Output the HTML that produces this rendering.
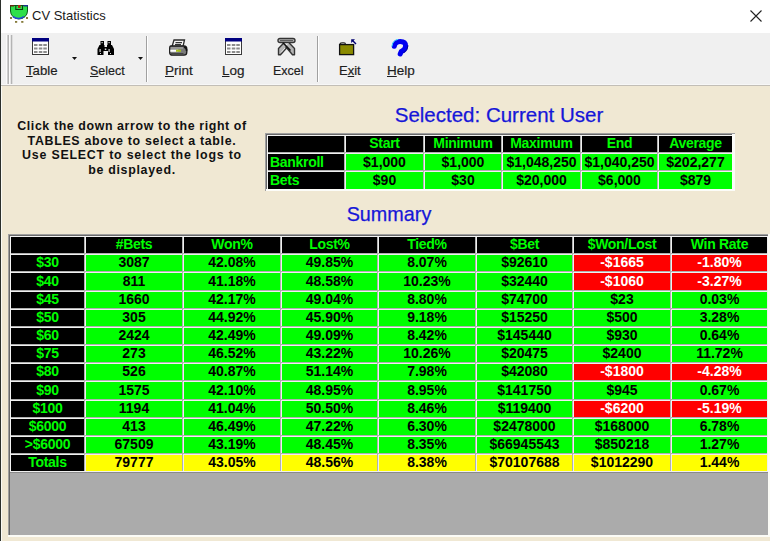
<!DOCTYPE html>
<html><head><meta charset="utf-8"><title>CV Statistics</title><style>
*{margin:0;padding:0;box-sizing:border-box}
html,body{width:770px;height:541px;overflow:hidden;background:#f0e8d3;font-family:"Liberation Sans",sans-serif}
.a{position:absolute}
.g{position:absolute;font-weight:bold;font-size:14px;letter-spacing:-0.3px;white-space:nowrap;overflow:hidden}
.d{letter-spacing:0}
.lbl{position:absolute;font-size:12.5px;color:#1e1e1e;-webkit-text-stroke:0.2px #1e1e1e;white-space:nowrap;line-height:14px}
.u{text-decoration:underline;text-underline-offset:1px}
</style></head>
<body>
<div class="a" style="left:0;top:0;width:770px;height:33px;background:#fff"></div>
<div class="a" style="left:0;top:0;width:1px;height:541px;background:#2b2f2b"></div>
<div class="a" style="left:1px;top:33px;width:1px;height:508px;background:#fafaf5"></div>
<svg class="a" style="left:9px;top:4px" width="22" height="22" viewBox="0 0 22 22">
<path d="M1.5 1.5 H18.5 V7 A8.5 8 0 0 1 1.5 7 Z" fill="#2ee04a" stroke="#0b5a1a" stroke-width="1"/>
<path d="M4 12.6 A8.5 8 0 0 0 15 12.6" fill="none" stroke="#2248d0" stroke-width="1.6"/>
<rect x="1" y="1" width="4" height="1.5" fill="#6a2a10"/>
<rect x="14.5" y="1" width="4.5" height="1.5" fill="#203090"/>
<path d="M6.8 1.5 V5.5 H13.5 V1.5" fill="none" stroke="#0a3a10" stroke-width="1.1"/>
<rect x="9" y="1" width="2.6" height="3" fill="#b02810"/>
<rect x="1" y="13" width="2" height="2" fill="#857a3a"/>
<rect x="17" y="13" width="2" height="2" fill="#857a3a"/>
<rect x="6" y="17" width="2.2" height="1.8" fill="#857a3a"/>
<rect x="12.2" y="17" width="2.2" height="1.8" fill="#857a3a"/>
</svg>
<div class="a" style="left:32px;top:8px;font-size:13px;color:#1a1a1a;white-space:nowrap;line-height:15px">CV Statistics</div>
<svg class="a" style="left:750px;top:10px" width="12" height="12" viewBox="0 0 12 12"><path d="M0.5 0.5 L11.5 11.5 M11.5 0.5 L0.5 11.5" stroke="#222" stroke-width="1.1"/></svg>
<div class="a" style="left:1px;top:33px;width:769px;height:51px;background:#f0f0f0"></div>
<div class="a" style="left:1px;top:84px;width:769px;height:1px;background:#f7f7f7"></div>
<div class="a" style="left:1px;top:85px;width:769px;height:1px;background:#c2beb6"></div>
<div class="a" style="left:6px;top:35px;width:1px;height:49px;background:#fafafa"></div>
<div class="a" style="left:7px;top:35px;width:1px;height:49px;background:#cdcdcd"></div>
<div class="a" style="left:8px;top:35px;width:1px;height:49px;background:#b4b4b4"></div>
<div class="a" style="left:9px;top:35px;width:1px;height:49px;background:#fafafa"></div>
<div class="a" style="left:10px;top:35px;width:1px;height:49px;background:#e6e6e6"></div>
<div class="a" style="left:11px;top:35px;width:1px;height:49px;background:#b4b4b4"></div>
<div class="a" style="left:12px;top:35px;width:1px;height:49px;background:#dedede"></div>
<div class="a" style="left:146px;top:36px;width:1px;height:46px;background:#a0a0a0"></div>
<div class="a" style="left:147px;top:36px;width:1px;height:46px;background:#fff"></div>
<div class="a" style="left:317px;top:36px;width:1px;height:46px;background:#a0a0a0"></div>
<div class="a" style="left:318px;top:36px;width:1px;height:46px;background:#fff"></div>
<svg class="a" style="left:72px;top:57px" width="5" height="3" viewBox="0 0 5 3"><path d="M0 0H5L2.5 3Z" fill="#111"/></svg>
<svg class="a" style="left:138px;top:57px" width="5" height="3" viewBox="0 0 5 3"><path d="M0 0H5L2.5 3Z" fill="#111"/></svg>
<svg class="a" style="left:32px;top:38px" width="17" height="17" viewBox="0 0 17 17">
<rect x="0.5" y="0.5" width="16" height="16" fill="#fff" stroke="#3a3a3a"/>
<rect x="0" y="0" width="17" height="3.5" fill="#000080"/>
<g fill="#8c8c8c">
<rect x="2" y="6" width="3.5" height="2"/><rect x="6.8" y="6" width="3.5" height="2"/><rect x="11.3" y="6" width="3.5" height="2"/>
<rect x="2" y="9.5" width="3.5" height="2"/><rect x="6.8" y="9.5" width="3.5" height="2"/><rect x="11.3" y="9.5" width="3.5" height="2"/>
<rect x="2" y="13" width="3.5" height="2"/><rect x="6.8" y="13" width="3.5" height="2"/><rect x="11.3" y="13" width="3.5" height="2"/>
</g></svg>
<svg class="a" style="left:225px;top:38px" width="17" height="17" viewBox="0 0 17 17">
<rect x="0.5" y="0.5" width="16" height="16" fill="#fff" stroke="#3a3a3a"/>
<rect x="0" y="0" width="17" height="3.5" fill="#000080"/>
<g fill="#8c8c8c">
<rect x="2" y="6" width="3.5" height="2"/><rect x="6.8" y="6" width="3.5" height="2"/><rect x="11.3" y="6" width="3.5" height="2"/>
<rect x="2" y="9.5" width="3.5" height="2"/><rect x="6.8" y="9.5" width="3.5" height="2"/><rect x="11.3" y="9.5" width="3.5" height="2"/>
<rect x="2" y="13" width="3.5" height="2"/><rect x="6.8" y="13" width="3.5" height="2"/><rect x="11.3" y="13" width="3.5" height="2"/>
</g></svg>
<svg class="a" style="left:97px;top:40px" width="18" height="16" viewBox="0 0 18 16">
<g fill="#000">
<rect x="3.5" y="1" width="3.5" height="4"/><rect x="10.5" y="1" width="3.5" height="4"/>
<path d="M2.5 5 H7.5 V7 H10 V5 H15 L17 9 V15 H11 V11 H6.5 V15 H0.5 V9 Z"/>
</g>
<g fill="#fff" opacity="0.85">
<rect x="4.5" y="2" width="1.2" height="1.2"/><rect x="11.5" y="2" width="1.2" height="1.2"/>
<rect x="2.5" y="9" width="1.2" height="3"/><rect x="11.5" y="9" width="1.2" height="3"/>
<rect x="3" y="13" width="1" height="1"/><rect x="13" y="13" width="1" height="1"/>
<rect x="7.8" y="8.5" width="1.5" height="1.5"/>
</g></svg>
<svg class="a" style="left:169px;top:39px" width="19" height="17" viewBox="0 0 19 17">
<path d="M5 1 H15.5 L14 7.5 H3 Z" fill="#f4f4f4" stroke="#2a2a2a" stroke-width="1.3"/>
<path d="M6.5 3.6 H13 M6 5.6 H12" stroke="#333" stroke-width="1.2"/>
<path d="M1.8 7 H15 Q17.8 7 17.8 10 V13 Q17.8 16.2 15 16.2 H3.5 Q0.7 16.2 0.7 13.5 V9.5 Q0.7 7 1.8 7Z" fill="#7a7a7a" stroke="#1a1a1a" stroke-width="1.3"/>
<path d="M1.5 9 H14" stroke="#b0b0b0" stroke-width="1"/>
<rect x="1.3" y="10.6" width="8" height="2.2" fill="#fff"/>
<rect x="7" y="10.6" width="5" height="2.2" fill="#a8c020"/>
<path d="M15 8 Q18 9 17.5 12" stroke="#111" stroke-width="1.6" fill="none"/>
<path d="M2 14.6 H14.5" stroke="#444" stroke-width="1.2"/>
</svg>
<svg class="a" style="left:277px;top:37px" width="19" height="19" viewBox="0 0 19 19">
<path d="M3 1.5 H16 Q18 1.5 18 3.5 Q18 5.5 16 5.5 H3 Q1 5.5 1 3.5 Q1 1.5 3 1.5Z" fill="#b4b4b4" stroke="#333" stroke-width="1.4"/>
<path d="M3 3.6 H16" stroke="#555" stroke-width="1"/>
<path d="M7 5.8 L1.5 11.5 V17.8 H3.5 L9.3 11.2 M12 5.8 L17.5 11.5 V17.8 H15.5 L8.5 9.5" fill="#b4b4b4" stroke="#333" stroke-width="1.4" stroke-linejoin="round"/>
<path d="M6 5.8 L13.5 13.5" stroke="#111" stroke-width="1.5"/>
<path d="M4 15.5 L8 11" stroke="#e8e8e8" stroke-width="1"/>
</svg>
<svg class="a" style="left:338px;top:38px" width="20" height="18" viewBox="0 0 20 18">
<path d="M2 6.5 Q2 4.8 4 4.8 H6 Q7.5 4.8 7.5 6.5" fill="#fff" stroke="#222" stroke-width="1.2"/>
<rect x="1.6" y="6.6" width="14" height="10" fill="#8a8a00" stroke="#111" stroke-width="1.3"/>
<path d="M18 6 L14.5 2.5" stroke="#000070" stroke-width="1.4"/>
<path d="M13.2 1.2 H17 L13.2 5 Z" fill="#000070"/>
</svg>
<svg class="a" style="left:390px;top:38px" width="20" height="20" viewBox="0 0 20 20">
<path d="M4.3 8.3 Q5 3.6 10.2 3.6 Q15.6 3.6 15.6 8 Q15.6 11.6 11.2 13.6 L10.2 16" fill="none" stroke="#0000f0" stroke-width="5" stroke-linecap="round"/>
<path d="M1.9 8.6 Q2.5 2.4 8 1.4" fill="none" stroke="#40e0ff" stroke-width="1"/>
<path d="M18 7.5 Q18 12 13.5 15" fill="none" stroke="#000090" stroke-width="1"/>
</svg>
<div class="lbl" style="left:26px;top:64px;font-size:13.2px"><span class="u">T</span>able</div>
<div class="lbl" style="left:90px;top:64px;font-size:12.5px"><span class="u">S</span>elect</div>
<div class="lbl" style="left:165px;top:64px;font-size:13.5px"><span class="u">P</span>rint</div>
<div class="lbl" style="left:222px;top:64px;font-size:13.5px"><span class="u">L</span>og</div>
<div class="lbl" style="left:273px;top:64px;font-size:12.5px">Excel</div>
<div class="lbl" style="left:339px;top:64px;font-size:13px">E<span class="u">x</span>it</div>
<div class="lbl" style="left:387px;top:64px;font-size:13.5px"><span class="u">H</span>elp</div>
<div class="a" style="left:12px;top:119px;width:240px;text-align:center;font-weight:bold;font-size:12.4px;line-height:14.7px;color:#111;letter-spacing:0.55px;white-space:nowrap"><span style="letter-spacing:0.6px">Click the down arrow to the right of</span><br><span style="letter-spacing:0.68px">TABLES above to select a table.</span><br><span style="letter-spacing:0.78px">Use SELECT to select the logs to</span><br><span style="letter-spacing:0.7px">be displayed.</span></div>
<div class="a" style="left:299px;top:104px;width:400px;text-align:center;font-size:20.5px;line-height:22px;color:#1616d8;-webkit-text-stroke:0.25px #1616d8;white-space:nowrap">Selected: Current User</div>
<div class="a" style="left:189px;top:203px;width:400px;text-align:center;font-size:19.8px;line-height:22px;color:#1616d8;-webkit-text-stroke:0.25px #1616d8;white-space:nowrap">Summary</div>
<div class="a" style="left:265px;top:133px;width:470px;height:58px;background:#f0f0f0"></div>
<div class="a" style="left:265px;top:133px;width:470px;height:1px;background:#a0a0a0"></div>
<div class="a" style="left:265px;top:133px;width:1px;height:58px;background:#a0a0a0"></div>
<div class="a" style="left:266px;top:134px;width:468px;height:1px;background:#696969"></div>
<div class="a" style="left:266px;top:134px;width:1px;height:56px;background:#696969"></div>
<div class="a" style="left:267px;top:135px;width:467px;height:1px;background:#f4f4f4"></div>
<div class="a" style="left:267px;top:135px;width:1px;height:55px;background:#f4f4f4"></div>
<div class="a" style="left:732px;top:134px;width:3px;height:57px;background:#fcfcf8"></div>
<div class="a" style="left:266px;top:189px;width:469px;height:2px;background:#fcfcf8"></div>
<div class="a" style="left:344px;top:136px;width:1px;height:53px;background:#b0b0b0"></div>
<div class="a" style="left:423px;top:136px;width:1px;height:53px;background:#b0b0b0"></div>
<div class="a" style="left:501px;top:136px;width:1px;height:53px;background:#b0b0b0"></div>
<div class="a" style="left:580px;top:136px;width:1px;height:53px;background:#b0b0b0"></div>
<div class="a" style="left:657px;top:136px;width:1px;height:53px;background:#b0b0b0"></div>
<div class="a" style="left:268px;top:152px;width:464px;height:1px;background:#b0b0b0"></div>
<div class="a" style="left:268px;top:170px;width:464px;height:1px;background:#b0b0b0"></div>
<div class="g" style="left:268px;top:136px;width:76px;height:16px;line-height:15px;background:#000;color:#00ff00;text-align:center;"></div>
<div class="g" style="left:346px;top:136px;width:77px;height:16px;line-height:15px;background:#000;color:#00ff00;text-align:center;">Start</div>
<div class="g" style="left:425px;top:136px;width:76px;height:16px;line-height:15px;background:#000;color:#00ff00;text-align:center;">Minimum</div>
<div class="g" style="left:503px;top:136px;width:77px;height:16px;line-height:15px;background:#000;color:#00ff00;text-align:center;">Maximum</div>
<div class="g" style="left:582px;top:136px;width:75px;height:16px;line-height:15px;background:#000;color:#00ff00;text-align:center;">End</div>
<div class="g" style="left:659px;top:136px;width:73px;height:16px;line-height:15px;background:#000;color:#00ff00;text-align:center;">Average</div>
<div class="g" style="left:268px;top:154px;width:76px;height:16px;line-height:17px;background:#000;color:#00ff00;text-align:left;padding-left:2px;">Bankroll</div>
<div class="g d" style="left:346px;top:154px;width:77px;height:16px;line-height:17px;background:#00ff00;color:#000;text-align:center;">$1,000</div>
<div class="g d" style="left:425px;top:154px;width:76px;height:16px;line-height:17px;background:#00ff00;color:#000;text-align:center;">$1,000</div>
<div class="g d" style="left:503px;top:154px;width:77px;height:16px;line-height:17px;background:#00ff00;color:#000;text-align:center;">$1,048,250</div>
<div class="g d" style="left:582px;top:154px;width:75px;height:16px;line-height:17px;background:#00ff00;color:#000;text-align:center;">$1,040,250</div>
<div class="g d" style="left:659px;top:154px;width:73px;height:16px;line-height:17px;background:#00ff00;color:#000;text-align:center;">$202,277</div>
<div class="g" style="left:268px;top:172px;width:76px;height:17px;line-height:16px;background:#000;color:#00ff00;text-align:left;padding-left:2px;">Bets</div>
<div class="g d" style="left:346px;top:172px;width:77px;height:17px;line-height:16px;background:#00ff00;color:#000;text-align:center;">$90</div>
<div class="g d" style="left:425px;top:172px;width:76px;height:17px;line-height:16px;background:#00ff00;color:#000;text-align:center;">$30</div>
<div class="g d" style="left:503px;top:172px;width:77px;height:17px;line-height:16px;background:#00ff00;color:#000;text-align:center;">$20,000</div>
<div class="g d" style="left:582px;top:172px;width:75px;height:17px;line-height:16px;background:#00ff00;color:#000;text-align:center;">$6,000</div>
<div class="g d" style="left:659px;top:172px;width:73px;height:17px;line-height:16px;background:#00ff00;color:#000;text-align:center;">$879</div>
<div class="a" style="left:8px;top:234px;width:762px;height:303px;background:#ababab"></div>
<div class="a" style="left:10px;top:236px;width:758px;height:236px;background:#f0f0f0"></div>
<div class="a" style="left:8px;top:234px;width:762px;height:1px;background:#a0a0a0"></div>
<div class="a" style="left:8px;top:234px;width:1px;height:303px;background:#a0a0a0"></div>
<div class="a" style="left:9px;top:235px;width:760px;height:1px;background:#696969"></div>
<div class="a" style="left:9px;top:235px;width:1px;height:301px;background:#696969"></div>
<div class="a" style="left:10px;top:236px;width:757px;height:1px;background:#f4f4f4"></div>
<div class="a" style="left:10px;top:236px;width:1px;height:235px;background:#f4f4f4"></div>
<div class="a" style="left:768px;top:234px;width:2px;height:303px;background:#fbfbf6"></div>
<div class="a" style="left:8px;top:535px;width:762px;height:2px;background:#fbfbf6"></div>
<div class="a" style="left:84px;top:237px;width:1px;height:234px;background:#b0b0b0"></div>
<div class="a" style="left:182px;top:237px;width:1px;height:234px;background:#b0b0b0"></div>
<div class="a" style="left:280px;top:237px;width:1px;height:234px;background:#b0b0b0"></div>
<div class="a" style="left:377px;top:237px;width:1px;height:234px;background:#b0b0b0"></div>
<div class="a" style="left:475px;top:237px;width:1px;height:234px;background:#b0b0b0"></div>
<div class="a" style="left:572px;top:237px;width:1px;height:234px;background:#b0b0b0"></div>
<div class="a" style="left:670px;top:237px;width:1px;height:234px;background:#b0b0b0"></div>
<div class="a" style="left:11px;top:253px;width:756px;height:1px;background:#b0b0b0"></div>
<div class="a" style="left:11px;top:271px;width:756px;height:1px;background:#b0b0b0"></div>
<div class="a" style="left:11px;top:290px;width:756px;height:1px;background:#b0b0b0"></div>
<div class="a" style="left:11px;top:308px;width:756px;height:1px;background:#b0b0b0"></div>
<div class="a" style="left:11px;top:326px;width:756px;height:1px;background:#b0b0b0"></div>
<div class="a" style="left:11px;top:344px;width:756px;height:1px;background:#b0b0b0"></div>
<div class="a" style="left:11px;top:362px;width:756px;height:1px;background:#b0b0b0"></div>
<div class="a" style="left:11px;top:380px;width:756px;height:1px;background:#b0b0b0"></div>
<div class="a" style="left:11px;top:399px;width:756px;height:1px;background:#b0b0b0"></div>
<div class="a" style="left:11px;top:417px;width:756px;height:1px;background:#b0b0b0"></div>
<div class="a" style="left:11px;top:435px;width:756px;height:1px;background:#b0b0b0"></div>
<div class="a" style="left:11px;top:453px;width:756px;height:1px;background:#b0b0b0"></div>
<div class="a" style="left:10px;top:472px;width:758px;height:1px;background:#8a8a8a"></div>
<div class="g" style="left:11px;top:237px;width:73px;height:16px;line-height:15px;background:#000;color:#00ff00;text-align:center;"></div>
<div class="g" style="left:86px;top:237px;width:96px;height:16px;line-height:15px;background:#000;color:#00ff00;text-align:center;">#Bets</div>
<div class="g" style="left:184px;top:237px;width:96px;height:16px;line-height:15px;background:#000;color:#00ff00;text-align:center;">Won%</div>
<div class="g" style="left:282px;top:237px;width:95px;height:16px;line-height:15px;background:#000;color:#00ff00;text-align:center;">Lost%</div>
<div class="g" style="left:379px;top:237px;width:96px;height:16px;line-height:15px;background:#000;color:#00ff00;text-align:center;">Tied%</div>
<div class="g" style="left:477px;top:237px;width:95px;height:16px;line-height:15px;background:#000;color:#00ff00;text-align:center;">$Bet</div>
<div class="g" style="left:574px;top:237px;width:96px;height:16px;line-height:15px;background:#000;color:#00ff00;text-align:center;">$Won/Lost</div>
<div class="g" style="left:672px;top:237px;width:95px;height:16px;line-height:15px;background:#000;color:#00ff00;text-align:center;">Win Rate</div>
<div class="g" style="left:11px;top:255px;width:73px;height:16px;line-height:15px;background:#000;color:#00ff00;text-align:center;">$30</div>
<div class="g d" style="left:86px;top:255px;width:96px;height:16px;line-height:15px;background:#00ff00;color:#000;text-align:center;">3087</div>
<div class="g d" style="left:184px;top:255px;width:96px;height:16px;line-height:15px;background:#00ff00;color:#000;text-align:center;">42.08%</div>
<div class="g d" style="left:282px;top:255px;width:95px;height:16px;line-height:15px;background:#00ff00;color:#000;text-align:center;">49.85%</div>
<div class="g d" style="left:379px;top:255px;width:96px;height:16px;line-height:15px;background:#00ff00;color:#000;text-align:center;">8.07%</div>
<div class="g d" style="left:477px;top:255px;width:95px;height:16px;line-height:15px;background:#00ff00;color:#000;text-align:center;">$92610</div>
<div class="g d" style="left:574px;top:255px;width:96px;height:16px;line-height:15px;background:#ff0000;color:#fff;text-align:center;">-$1665</div>
<div class="g d" style="left:672px;top:255px;width:95px;height:16px;line-height:15px;background:#ff0000;color:#fff;text-align:center;">-1.80%</div>
<div class="g" style="left:11px;top:273px;width:73px;height:17px;line-height:16px;background:#000;color:#00ff00;text-align:center;">$40</div>
<div class="g d" style="left:86px;top:273px;width:96px;height:17px;line-height:16px;background:#00ff00;color:#000;text-align:center;">811</div>
<div class="g d" style="left:184px;top:273px;width:96px;height:17px;line-height:16px;background:#00ff00;color:#000;text-align:center;">41.18%</div>
<div class="g d" style="left:282px;top:273px;width:95px;height:17px;line-height:16px;background:#00ff00;color:#000;text-align:center;">48.58%</div>
<div class="g d" style="left:379px;top:273px;width:96px;height:17px;line-height:16px;background:#00ff00;color:#000;text-align:center;">10.23%</div>
<div class="g d" style="left:477px;top:273px;width:95px;height:17px;line-height:16px;background:#00ff00;color:#000;text-align:center;">$32440</div>
<div class="g d" style="left:574px;top:273px;width:96px;height:17px;line-height:16px;background:#ff0000;color:#fff;text-align:center;">-$1060</div>
<div class="g d" style="left:672px;top:273px;width:95px;height:17px;line-height:16px;background:#ff0000;color:#fff;text-align:center;">-3.27%</div>
<div class="g" style="left:11px;top:292px;width:73px;height:16px;line-height:15px;background:#000;color:#00ff00;text-align:center;">$45</div>
<div class="g d" style="left:86px;top:292px;width:96px;height:16px;line-height:15px;background:#00ff00;color:#000;text-align:center;">1660</div>
<div class="g d" style="left:184px;top:292px;width:96px;height:16px;line-height:15px;background:#00ff00;color:#000;text-align:center;">42.17%</div>
<div class="g d" style="left:282px;top:292px;width:95px;height:16px;line-height:15px;background:#00ff00;color:#000;text-align:center;">49.04%</div>
<div class="g d" style="left:379px;top:292px;width:96px;height:16px;line-height:15px;background:#00ff00;color:#000;text-align:center;">8.80%</div>
<div class="g d" style="left:477px;top:292px;width:95px;height:16px;line-height:15px;background:#00ff00;color:#000;text-align:center;">$74700</div>
<div class="g d" style="left:574px;top:292px;width:96px;height:16px;line-height:15px;background:#00ff00;color:#000;text-align:center;">$23</div>
<div class="g d" style="left:672px;top:292px;width:95px;height:16px;line-height:15px;background:#00ff00;color:#000;text-align:center;">0.03%</div>
<div class="g" style="left:11px;top:310px;width:73px;height:16px;line-height:15px;background:#000;color:#00ff00;text-align:center;">$50</div>
<div class="g d" style="left:86px;top:310px;width:96px;height:16px;line-height:15px;background:#00ff00;color:#000;text-align:center;">305</div>
<div class="g d" style="left:184px;top:310px;width:96px;height:16px;line-height:15px;background:#00ff00;color:#000;text-align:center;">44.92%</div>
<div class="g d" style="left:282px;top:310px;width:95px;height:16px;line-height:15px;background:#00ff00;color:#000;text-align:center;">45.90%</div>
<div class="g d" style="left:379px;top:310px;width:96px;height:16px;line-height:15px;background:#00ff00;color:#000;text-align:center;">9.18%</div>
<div class="g d" style="left:477px;top:310px;width:95px;height:16px;line-height:15px;background:#00ff00;color:#000;text-align:center;">$15250</div>
<div class="g d" style="left:574px;top:310px;width:96px;height:16px;line-height:15px;background:#00ff00;color:#000;text-align:center;">$500</div>
<div class="g d" style="left:672px;top:310px;width:95px;height:16px;line-height:15px;background:#00ff00;color:#000;text-align:center;">3.28%</div>
<div class="g" style="left:11px;top:328px;width:73px;height:16px;line-height:15px;background:#000;color:#00ff00;text-align:center;">$60</div>
<div class="g d" style="left:86px;top:328px;width:96px;height:16px;line-height:15px;background:#00ff00;color:#000;text-align:center;">2424</div>
<div class="g d" style="left:184px;top:328px;width:96px;height:16px;line-height:15px;background:#00ff00;color:#000;text-align:center;">42.49%</div>
<div class="g d" style="left:282px;top:328px;width:95px;height:16px;line-height:15px;background:#00ff00;color:#000;text-align:center;">49.09%</div>
<div class="g d" style="left:379px;top:328px;width:96px;height:16px;line-height:15px;background:#00ff00;color:#000;text-align:center;">8.42%</div>
<div class="g d" style="left:477px;top:328px;width:95px;height:16px;line-height:15px;background:#00ff00;color:#000;text-align:center;">$145440</div>
<div class="g d" style="left:574px;top:328px;width:96px;height:16px;line-height:15px;background:#00ff00;color:#000;text-align:center;">$930</div>
<div class="g d" style="left:672px;top:328px;width:95px;height:16px;line-height:15px;background:#00ff00;color:#000;text-align:center;">0.64%</div>
<div class="g" style="left:11px;top:346px;width:73px;height:16px;line-height:15px;background:#000;color:#00ff00;text-align:center;">$75</div>
<div class="g d" style="left:86px;top:346px;width:96px;height:16px;line-height:15px;background:#00ff00;color:#000;text-align:center;">273</div>
<div class="g d" style="left:184px;top:346px;width:96px;height:16px;line-height:15px;background:#00ff00;color:#000;text-align:center;">46.52%</div>
<div class="g d" style="left:282px;top:346px;width:95px;height:16px;line-height:15px;background:#00ff00;color:#000;text-align:center;">43.22%</div>
<div class="g d" style="left:379px;top:346px;width:96px;height:16px;line-height:15px;background:#00ff00;color:#000;text-align:center;">10.26%</div>
<div class="g d" style="left:477px;top:346px;width:95px;height:16px;line-height:15px;background:#00ff00;color:#000;text-align:center;">$20475</div>
<div class="g d" style="left:574px;top:346px;width:96px;height:16px;line-height:15px;background:#00ff00;color:#000;text-align:center;">$2400</div>
<div class="g d" style="left:672px;top:346px;width:95px;height:16px;line-height:15px;background:#00ff00;color:#000;text-align:center;">11.72%</div>
<div class="g" style="left:11px;top:364px;width:73px;height:16px;line-height:15px;background:#000;color:#00ff00;text-align:center;">$80</div>
<div class="g d" style="left:86px;top:364px;width:96px;height:16px;line-height:15px;background:#00ff00;color:#000;text-align:center;">526</div>
<div class="g d" style="left:184px;top:364px;width:96px;height:16px;line-height:15px;background:#00ff00;color:#000;text-align:center;">40.87%</div>
<div class="g d" style="left:282px;top:364px;width:95px;height:16px;line-height:15px;background:#00ff00;color:#000;text-align:center;">51.14%</div>
<div class="g d" style="left:379px;top:364px;width:96px;height:16px;line-height:15px;background:#00ff00;color:#000;text-align:center;">7.98%</div>
<div class="g d" style="left:477px;top:364px;width:95px;height:16px;line-height:15px;background:#00ff00;color:#000;text-align:center;">$42080</div>
<div class="g d" style="left:574px;top:364px;width:96px;height:16px;line-height:15px;background:#ff0000;color:#fff;text-align:center;">-$1800</div>
<div class="g d" style="left:672px;top:364px;width:95px;height:16px;line-height:15px;background:#ff0000;color:#fff;text-align:center;">-4.28%</div>
<div class="g" style="left:11px;top:382px;width:73px;height:17px;line-height:16px;background:#000;color:#00ff00;text-align:center;">$90</div>
<div class="g d" style="left:86px;top:382px;width:96px;height:17px;line-height:16px;background:#00ff00;color:#000;text-align:center;">1575</div>
<div class="g d" style="left:184px;top:382px;width:96px;height:17px;line-height:16px;background:#00ff00;color:#000;text-align:center;">42.10%</div>
<div class="g d" style="left:282px;top:382px;width:95px;height:17px;line-height:16px;background:#00ff00;color:#000;text-align:center;">48.95%</div>
<div class="g d" style="left:379px;top:382px;width:96px;height:17px;line-height:16px;background:#00ff00;color:#000;text-align:center;">8.95%</div>
<div class="g d" style="left:477px;top:382px;width:95px;height:17px;line-height:16px;background:#00ff00;color:#000;text-align:center;">$141750</div>
<div class="g d" style="left:574px;top:382px;width:96px;height:17px;line-height:16px;background:#00ff00;color:#000;text-align:center;">$945</div>
<div class="g d" style="left:672px;top:382px;width:95px;height:17px;line-height:16px;background:#00ff00;color:#000;text-align:center;">0.67%</div>
<div class="g" style="left:11px;top:401px;width:73px;height:16px;line-height:15px;background:#000;color:#00ff00;text-align:center;">$100</div>
<div class="g d" style="left:86px;top:401px;width:96px;height:16px;line-height:15px;background:#00ff00;color:#000;text-align:center;">1194</div>
<div class="g d" style="left:184px;top:401px;width:96px;height:16px;line-height:15px;background:#00ff00;color:#000;text-align:center;">41.04%</div>
<div class="g d" style="left:282px;top:401px;width:95px;height:16px;line-height:15px;background:#00ff00;color:#000;text-align:center;">50.50%</div>
<div class="g d" style="left:379px;top:401px;width:96px;height:16px;line-height:15px;background:#00ff00;color:#000;text-align:center;">8.46%</div>
<div class="g d" style="left:477px;top:401px;width:95px;height:16px;line-height:15px;background:#00ff00;color:#000;text-align:center;">$119400</div>
<div class="g d" style="left:574px;top:401px;width:96px;height:16px;line-height:15px;background:#ff0000;color:#fff;text-align:center;">-$6200</div>
<div class="g d" style="left:672px;top:401px;width:95px;height:16px;line-height:15px;background:#ff0000;color:#fff;text-align:center;">-5.19%</div>
<div class="g" style="left:11px;top:419px;width:73px;height:16px;line-height:15px;background:#000;color:#00ff00;text-align:center;">$6000</div>
<div class="g d" style="left:86px;top:419px;width:96px;height:16px;line-height:15px;background:#00ff00;color:#000;text-align:center;">413</div>
<div class="g d" style="left:184px;top:419px;width:96px;height:16px;line-height:15px;background:#00ff00;color:#000;text-align:center;">46.49%</div>
<div class="g d" style="left:282px;top:419px;width:95px;height:16px;line-height:15px;background:#00ff00;color:#000;text-align:center;">47.22%</div>
<div class="g d" style="left:379px;top:419px;width:96px;height:16px;line-height:15px;background:#00ff00;color:#000;text-align:center;">6.30%</div>
<div class="g d" style="left:477px;top:419px;width:95px;height:16px;line-height:15px;background:#00ff00;color:#000;text-align:center;">$2478000</div>
<div class="g d" style="left:574px;top:419px;width:96px;height:16px;line-height:15px;background:#00ff00;color:#000;text-align:center;">$168000</div>
<div class="g d" style="left:672px;top:419px;width:95px;height:16px;line-height:15px;background:#00ff00;color:#000;text-align:center;">6.78%</div>
<div class="g" style="left:11px;top:437px;width:73px;height:16px;line-height:15px;background:#000;color:#00ff00;text-align:center;">>$6000</div>
<div class="g d" style="left:86px;top:437px;width:96px;height:16px;line-height:15px;background:#00ff00;color:#000;text-align:center;">67509</div>
<div class="g d" style="left:184px;top:437px;width:96px;height:16px;line-height:15px;background:#00ff00;color:#000;text-align:center;">43.19%</div>
<div class="g d" style="left:282px;top:437px;width:95px;height:16px;line-height:15px;background:#00ff00;color:#000;text-align:center;">48.45%</div>
<div class="g d" style="left:379px;top:437px;width:96px;height:16px;line-height:15px;background:#00ff00;color:#000;text-align:center;">8.35%</div>
<div class="g d" style="left:477px;top:437px;width:95px;height:16px;line-height:15px;background:#00ff00;color:#000;text-align:center;">$66945543</div>
<div class="g d" style="left:574px;top:437px;width:96px;height:16px;line-height:15px;background:#00ff00;color:#000;text-align:center;">$850218</div>
<div class="g d" style="left:672px;top:437px;width:95px;height:16px;line-height:15px;background:#00ff00;color:#000;text-align:center;">1.27%</div>
<div class="g" style="left:11px;top:455px;width:73px;height:16px;line-height:15px;background:#000;color:#00ff00;text-align:center;">Totals</div>
<div class="g d" style="left:86px;top:455px;width:96px;height:16px;line-height:15px;background:#ffff00;color:#000;text-align:center;">79777</div>
<div class="g d" style="left:184px;top:455px;width:96px;height:16px;line-height:15px;background:#ffff00;color:#000;text-align:center;">43.05%</div>
<div class="g d" style="left:282px;top:455px;width:95px;height:16px;line-height:15px;background:#ffff00;color:#000;text-align:center;">48.56%</div>
<div class="g d" style="left:379px;top:455px;width:96px;height:16px;line-height:15px;background:#ffff00;color:#000;text-align:center;">8.38%</div>
<div class="g d" style="left:477px;top:455px;width:95px;height:16px;line-height:15px;background:#ffff00;color:#000;text-align:center;">$70107688</div>
<div class="g d" style="left:574px;top:455px;width:96px;height:16px;line-height:15px;background:#ffff00;color:#000;text-align:center;">$1012290</div>
<div class="g d" style="left:672px;top:455px;width:95px;height:16px;line-height:15px;background:#ffff00;color:#000;text-align:center;">1.44%</div>
</body></html>
